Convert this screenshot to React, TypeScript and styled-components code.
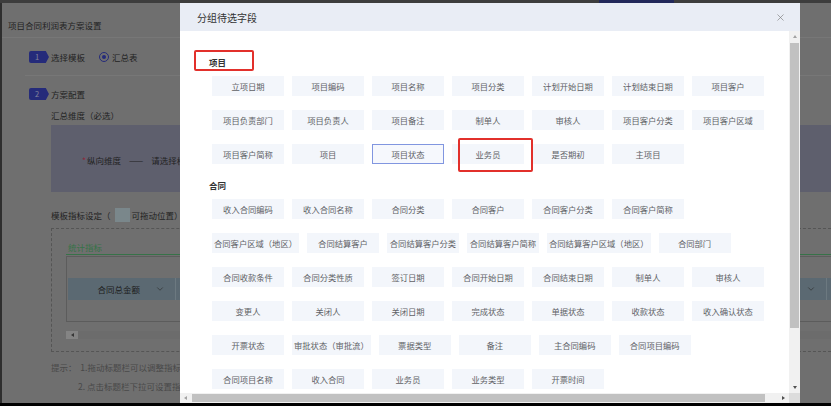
import React from 'react';
import styled, { createGlobalStyle, css } from 'styled-components';
import { X, ChevronDown } from 'lucide-react';

const Global = createGlobalStyle`
  html, body { margin: 0; padding: 0; width: 831px; height: 406px; overflow: hidden; background: #000; }
  body { font-family: "Noto Sans CJK SC", "Noto Sans", sans-serif; }
  * { box-sizing: border-box; }
`;

const Screen = styled.div`
  position: relative;
  width: 831px;
  height: 406px;
  display: flex;
  flex-direction: column;
  overflow: hidden;
`;

const TopBar = styled.div`
  height: 3px;
  flex: none;
  background: #666;
  display: flex;
  padding-left: 599px;
`;

const TopTab = styled.div`
  width: 75px;
  background: #3a4496;
`;

const Main = styled.div`
  flex: 1;
  display: flex;
  min-height: 0;
`;

const SideEdge = styled.div`
  width: 2px;
  flex: none;
  background: #4d4d4d;
`;

const Page = styled.div`
  flex: 1;
  min-width: 0;
  background: #b9b9b9;
  color: #3a3a3a;
  font-size: 8.5px;
  display: flex;
  flex-direction: column;
`;

const BottomBar = styled.div`
  height: 3px;
  flex: none;
  background: #000;
`;

const PageTitle = styled.div`
  height: 35px;
  padding: 15px 0 0 6px;
  line-height: 14px;
  border-bottom: 1px solid #c6c6c6;
  white-space: nowrap;
`;

const PageBody = styled.div`
  padding-left: 27px;
  display: flex;
  flex-direction: column;
`;

const StepRow = styled.div<{ $top: number }>`
  margin-top: ${p => p.$top}px;
  height: 20px;
  display: flex;
  align-items: center;
  gap: 2px;
  white-space: nowrap;
`;

const StepBadge = styled.div`
  width: 20px;
  height: 12px;
  background: #3f48cc;
  color: #d8dbff;
  font-size: 7.5px;
  line-height: 12px;
  padding-left: 6px;
  border-radius: 2px 0 0 2px;
  clip-path: polygon(0 0, 84% 0, 100% 50%, 84% 100%, 0 100%);
`;

const RadioGroup = styled.div`
  display: flex;
  align-items: center;
  gap: 3px;
  margin-left: 12px;
`;

const RadioDot = styled.span`
  width: 10px;
  height: 10px;
  border-radius: 50%;
  border: 1px solid #3f48cc;
  display: flex;
  align-items: center;
  justify-content: center;
  &::after {
    content: '';
    width: 4px;
    height: 4px;
    border-radius: 50%;
    background: #3f48cc;
  }
`;

const Divider = styled.div`
  margin: 8px 0 0 -4px;
  height: 1px;
  background: #c6c6c6;
`;

const Indent = styled.div`
  padding-left: 22px;
  display: flex;
  flex-direction: column;
`;

const PlainLine = styled.div<{ $top: number; $indent?: number }>`
  margin-top: ${p => p.$top}px;
  padding-left: ${p => p.$indent ?? 0}px;
  line-height: 14px;
  white-space: nowrap;
`;

const HintLine = styled(PlainLine)`
  color: #7a7a7a;
`;

const DimBox = styled.div`
  margin-top: 3px;
  height: 67px;
  background: #9d9eb6;
  padding: 3px 0 0 31px;
  display: flex;
  align-items: center;
  gap: 8px;
  white-space: nowrap;
`;

const Required = styled.span`
  color: #e94661;
  margin-right: 1px;
`;

const IndicatorRow = styled.div`
  margin-top: 13px;
  height: 20px;
  display: flex;
  align-items: center;
  white-space: nowrap;
`;

const Swatch = styled.span`
  width: 15px;
  height: 14px;
  background: #cbe1e8;
  margin: 0 2px 0 4px;
`;

const DashedBox = styled.div`
  margin-top: 3px;
  height: 124px;
  border: 1px dashed #8e8e8e;
  border-right: none;
  padding-left: 14px;
  display: flex;
  flex-direction: column;
`;

const TabHeader = styled.div`
  margin-top: 12px;
  height: 14px;
  line-height: 13px;
  padding-left: 2px;
  color: #5cbf78;
  border-bottom: 1px solid #5cbf78;
`;

const TableBox = styled.div`
  margin-top: 1px;
  height: 66px;
  border: 1px solid #9a9a9a;
  border-right: none;
  padding: 21px 0 0 1px;
`;

const HeaderBand = styled.div`
  height: 22px;
  background: #98b0bf;
  display: flex;
`;

const HeaderCell = styled.div`
  flex: 0 0 108.4px;
  position: relative;
  display: flex;
  align-items: center;
  justify-content: center;
  padding-right: 6px;
  border-right: 1px solid #b5cad6;
  color: #333;
  svg {
    position: absolute;
    right: 10px;
    top: 6px;
    color: #4a4a4a;
  }
`;

const PageScroll = styled.div`
  margin-top: 9px;
  height: 8px;
  display: flex;
  align-items: center;
  background: #dcdcdc;
`;

const PageScrollArrow = styled.div`
  width: 12px;
  display: flex;
  justify-content: center;
  &::before {
    content: '';
    border-top: 2px solid transparent;
    border-bottom: 2px solid transparent;
    border-right: 3px solid #5a5a5a;
  }
`;

const PageScrollThumb = styled.div`
  flex: 1;
  height: 8px;
  background: #b4b4b4;
`;

const Overlay = styled.div`
  position: absolute;
  inset: 0 0 3px 0;
  background: rgba(0, 0, 0, 0.4);
  z-index: 1;
`;

/* ---------- modal ---------- */

const Modal = styled.div`
  position: absolute;
  left: 180px;
  top: 3px;
  width: 620px;
  height: 400px;
  background: #fff;
  z-index: 2;
  display: flex;
  flex-direction: column;
`;

const ModalHeader = styled.div`
  height: 28px;
  flex: none;
  background: #e9edf5;
  padding: 0 14px 0 17px;
  display: flex;
  align-items: center;
  justify-content: space-between;
`;

const ModalTitle = styled.div`
  font-size: 10px;
  color: #333;
`;

const CloseButton = styled.div`
  width: 12px;
  height: 12px;
  display: flex;
  align-items: center;
  justify-content: center;
  color: #7a7a7a;
`;

const ModalBody = styled.div`
  flex: 1;
  min-height: 0;
  display: grid;
  grid-template-columns: 1fr 11px;
  grid-template-rows: 1fr 10px;
`;

const Content = styled.div`
  position: relative;
  overflow: hidden;
  padding: 24px 0 0 29px;
`;

const GroupLabel = styled.div<{ $top?: number }>`
  margin-top: ${p => p.$top ?? 0}px;
  height: 14px;
  line-height: 14px;
  font-size: 8.5px;
  font-weight: 700;
  color: #333;
`;

const FieldGrid = styled.div`
  margin: 7px 0 0 3px;
  width: 553px;
  display: flex;
  flex-wrap: wrap;
  gap: 14px 8px;
`;

const Field = styled.div<{ $active?: boolean }>`
  height: 20px;
  min-width: 72px;
  padding: 0 1px;
  background: #f3f6fb;
  border: 1px solid transparent;
  font-size: 8.3px;
  line-height: 18px;
  color: #606266;
  text-align: center;
  white-space: nowrap;
  ${p =>
    p.$active &&
    css`
      border-color: #8196e0;
      background: #f6f8fd;
    `}
`;

const Highlight = styled.div<{ $x: number; $y: number; $w: number; $h: number }>`
  position: absolute;
  left: ${p => p.$x}px;
  top: ${p => p.$y}px;
  width: ${p => p.$w}px;
  height: ${p => p.$h}px;
  border: 2px solid #e2302b;
  border-radius: 2px;
  pointer-events: none;
`;

const VTrack = styled.div`
  background: #f1f1f1;
  display: flex;
  flex-direction: column;
  align-items: center;
`;

const HTrack = styled.div`
  background: #f1f1f1;
  display: flex;
  align-items: center;
`;

const Corner = styled.div`
  background: #dcdcdc;
`;

const Arrow = styled.div<{ $dir: 'up' | 'down' | 'left' | 'right' }>`
  flex: none;
  width: 11px;
  height: ${p => (p.$dir === 'up' || p.$dir === 'down' ? '11px' : '10px')};
  display: flex;
  align-items: center;
  justify-content: center;
  &::before {
    content: '';
    ${p =>
      p.$dir === 'up'
        ? css`
            border-left: 2.5px solid transparent;
            border-right: 2.5px solid transparent;
            border-bottom: 3px solid #a3a3a3;
          `
        : p.$dir === 'down'
        ? css`
            border-left: 2.5px solid transparent;
            border-right: 2.5px solid transparent;
            border-top: 3px solid #505050;
          `
        : p.$dir === 'left'
        ? css`
            border-top: 2.5px solid transparent;
            border-bottom: 2.5px solid transparent;
            border-right: 3px solid #a3a3a3;
          `
        : css`
            border-top: 2.5px solid transparent;
            border-bottom: 2.5px solid transparent;
            border-left: 3px solid #505050;
          `}
  }
`;

const VThumb = styled.div`
  margin-top: 1px;
  width: 9px;
  height: 285px;
  background: #c1c1c1;
`;

const HThumb = styled.div`
  margin-left: 1px;
  width: 573px;
  height: 8px;
  background: #c1c1c1;
`;

const Spacer = styled.div`
  flex: 1;
`;

const projectFields = [
  '立项日期', '项目编码', '项目名称', '项目分类', '计划开始日期', '计划结束日期', '项目客户',
  '项目负责部门', '项目负责人', '项目备注', '制单人', '审核人', '项目客户分类', '项目客户区域',
  '项目客户简称', '项目', '项目状态', '业务员', '是否期初', '主项目',
];

const contractFields = [
  '收入合同编码', '收入合同名称', '合同分类', '合同客户', '合同客户分类', '合同客户简称',
  '合同客户区域（地区）', '合同结算客户', '合同结算客户分类', '合同结算客户简称', '合同结算客户区域（地区）', '合同部门',
  '合同收款条件', '合同分类性质', '签订日期', '合同开始日期', '合同结束日期', '制单人', '审核人',
  '变更人', '关闭人', '关闭日期', '完成状态', '单据状态', '收款状态', '收入确认状态',
  '开票状态', '审批状态（审批流）', '票据类型', '备注', '主合同编码', '合同项目编码',
  '合同项目名称', '收入合同', '业务员', '业务类型', '开票时间',
];

const indicatorColumns = ['合同总金额', '合同成本', '合同利润', '回款金额', '开票金额', '收款金额', '利润率'];

export default function App() {
  return (
    <>
      <Global />
      <Screen>
        <TopBar>
          <TopTab />
        </TopBar>
        <Main>
          <SideEdge />
          <Page>
            <PageTitle>项目合同利润表方案设置</PageTitle>
            <PageBody>
              <StepRow $top={9}>
                <StepBadge>1</StepBadge>
                <span>选择模板</span>
                <RadioGroup>
                  <RadioDot />
                  <span>汇总表</span>
                </RadioGroup>
              </StepRow>
              <Divider />
              <StepRow $top={8}>
                <StepBadge>2</StepBadge>
                <span>方案配置</span>
              </StepRow>
              <Indent>
                <PlainLine $top={4}>汇总维度（必选）</PlainLine>
                <DimBox>
                  <span>
                    <Required>*</Required>纵向维度
                  </span>
                  <span>——</span>
                  <span>请选择横向维度</span>
                </DimBox>
                <IndicatorRow>
                  模板指标设定（<Swatch />可拖动位置）
                </IndicatorRow>
                <DashedBox>
                  <TabHeader>统计指标</TabHeader>
                  <TableBox>
                    <HeaderBand>
                      {indicatorColumns.map(t => (
                        <HeaderCell key={t}>
                          {t}
                          <ChevronDown size={10} strokeWidth={1.6} />
                        </HeaderCell>
                      ))}
                    </HeaderBand>
                  </TableBox>
                  <PageScroll>
                    <PageScrollArrow />
                    <PageScrollThumb />
                  </PageScroll>
                </DashedBox>
                <HintLine $top={8}>提示：&nbsp;&nbsp;1.拖动标题栏可以调整指标顺序</HintLine>
                <HintLine $top={5} $indent={27}>2. 点击标题栏下拉可设置指标属性</HintLine>
              </Indent>
            </PageBody>
          </Page>
        </Main>
        <BottomBar />
        <Overlay />
        <Modal>
          <ModalHeader>
            <ModalTitle>分组待选字段</ModalTitle>
            <CloseButton>
              <X size={11} strokeWidth={1.4} />
            </CloseButton>
          </ModalHeader>
          <ModalBody>
            <Content>
              <GroupLabel>项目</GroupLabel>
              <FieldGrid>
                {projectFields.map((f, i) => (
                  <Field key={`p${i}`} $active={f === '项目状态'}>
                    {f}
                  </Field>
                ))}
              </FieldGrid>
              <GroupLabel $top={14}>合同</GroupLabel>
              <FieldGrid>
                {contractFields.map((f, i) => (
                  <Field key={`c${i}`}>{f}</Field>
                ))}
              </FieldGrid>
              <Highlight $x={14} $y={19} $w={60} $h={21} />
              <Highlight $x={278} $y={107} $w={75} $h={34} />
            </Content>
            <VTrack>
              <Arrow $dir="up" />
              <VThumb />
              <Spacer />
              <Arrow $dir="down" />
            </VTrack>
            <HTrack>
              <Arrow $dir="left" />
              <HThumb />
              <Spacer />
              <Arrow $dir="right" />
            </HTrack>
            <Corner />
          </ModalBody>
        </Modal>
      </Screen>
    </>
  );
}
